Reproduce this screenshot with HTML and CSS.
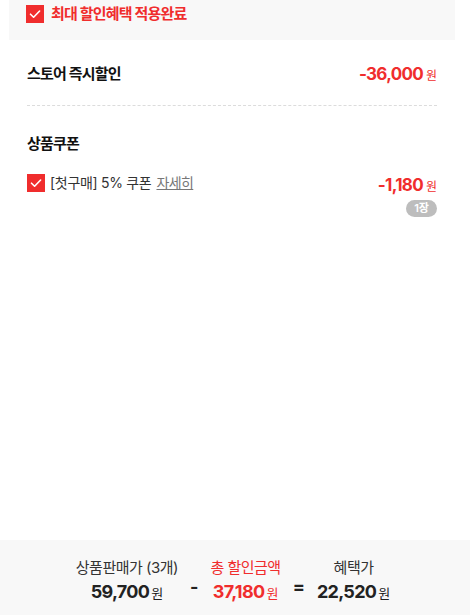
FILE: index.html
```html
<!DOCTYPE html>
<html lang="ko">
<head>
<meta charset="utf-8">
<link rel="stylesheet" href="styles.css">
</head>
<body>
<div class="page">
  <div class="wrap">
    <div class="banner">
      <span class="chk"><svg viewBox="0 0 18 18" width="18" height="18"><path d="M4.5 9.2 L7.6 12.2 L13.6 6" fill="none" stroke="#fff" stroke-width="1.6" stroke-linecap="round" stroke-linejoin="round"/></svg></span>
      <span class="banner-text">최대 할인혜택 적용완료</span>
    </div>
    <div class="row store">
      <span class="title">스토어 즉시할인</span>
      <span class="amt"><b>-36,000</b><span class="won">원</span></span>
    </div>
    <div class="coupon">
      <div class="title">상품쿠폰</div>
      <div class="crow">
        <div class="cleft">
          <span class="chk"><svg viewBox="0 0 18 18" width="18" height="18"><path d="M4.5 9.2 L7.6 12.2 L13.6 6" fill="none" stroke="#fff" stroke-width="1.6" stroke-linecap="round" stroke-linejoin="round"/></svg></span>
          <span class="cname">[첫구매] 5% 쿠폰</span>
          <a class="more">자세히</a>
        </div>
        <div class="cright">
          <span class="amt"><b>-1,180</b><span class="won">원</span></span>
          <span class="badge">1장</span>
        </div>
      </div>
    </div>
  </div>
  <div class="footer">
    <div class="col">
      <div class="lbl">상품판매가 (3개)</div>
      <div class="val"><b>59,700</b><span class="won">원</span></div>
    </div>
    <div class="op">-</div>
    <div class="col red">
      <div class="lbl">총 할인금액</div>
      <div class="val"><b>37,180</b><span class="won">원</span></div>
    </div>
    <div class="op">=</div>
    <div class="col">
      <div class="lbl">혜택가</div>
      <div class="val"><b>22,520</b><span class="won">원</span></div>
    </div>
  </div>
</div>
</body>
</html>
```
FILE: styles.css
```css
* { box-sizing: border-box; }
html, body { margin: 0; padding: 0; background: #fff; }
body {
  font-family: Inter, "Noto Sans CJK KR", sans-serif;
  color: #222;
  width: 470px;
  height: 615px;
  overflow: hidden;
}
.page {
  height: 615px;
  display: flex;
  flex-direction: column;
}
.wrap {
  margin: 0 15px 0 9px;
  flex: 1;
}
.banner {
  background: #f8f8f8;
  height: 40px;
  display: flex;
  align-items: flex-start;
  padding: 5px 17px 0;
  gap: 7px;
}
.chk {
  width: 18px;
  height: 18px;
  background: #f02d2d;
  display: inline-flex;
  flex: none;
}
.banner-text {
  color: #f02d2d;
  font-weight: 700;
  font-size: 15px;
  line-height: 18px;
  letter-spacing: -0.8px;
}
.row {
  display: flex;
  justify-content: space-between;
  align-items: center;
}
.store {
  margin: 0 18px;
  padding: 23px 0 20px;
  border-bottom: 1px dashed #dcdcdc;
}
.title {
  font-size: 15px;
  font-weight: 700;
  line-height: 22px;
  color: #111;
  letter-spacing: -0.8px;
}
.amt {
  color: #f02d2d;
  display: inline-flex;
  align-items: baseline;
}
.amt b {
  font-size: 17px;
  font-weight: 700;
  letter-spacing: -0.7px;
}
.won {
  font-size: 12px;
  margin-left: 3px;
}
.coupon {
  padding: 27px 18px 0;
}
.crow {
  display: flex;
  justify-content: space-between;
  align-items: flex-start;
  margin-top: 19px;
}
.cleft {
  display: flex;
  align-items: center;
  gap: 5px;
}
.cname {
  font-size: 14px;
  color: #333;
  line-height: 18px;
  letter-spacing: -0.3px;
}
.more {
  font-size: 14px;
  color: #777;
  text-decoration: underline;
  line-height: 18px;
  letter-spacing: -0.6px;
}
.cright {
  display: flex;
  flex-direction: column;
  align-items: flex-end;
  padding-top: 1px;
}
.badge {
  margin-top: 5px;
  background: #bdbdbd;
  color: #fff;
  font-size: 11px;
  font-weight: 600;
  line-height: 17px;
  padding: 0 8px;
  border-radius: 9px;
}
.footer {
  background: #f8f8f8;
  height: 75px;
  display: flex;
  justify-content: center;
  align-items: center;
  gap: 12px;
  padding: 4px 4px 0 0;
}
.col {
  display: flex;
  flex-direction: column;
  align-items: center;
}
.lbl {
  font-size: 15px;
  color: #333;
  line-height: 20px;
  letter-spacing: -0.5px;
}
.val {
  display: inline-flex;
  align-items: baseline;
  color: #222;
  margin-top: 3px;
}
.val b {
  font-size: 18px;
  font-weight: 700;
  letter-spacing: -0.7px;
}
.val .won { font-size: 13px; margin-left: 2px; }
.red .lbl, .red .val { color: #f02d2d; }
.op {
  font-size: 18px;
  font-weight: 700;
  color: #222;
  margin-top: 14px;
}
```
